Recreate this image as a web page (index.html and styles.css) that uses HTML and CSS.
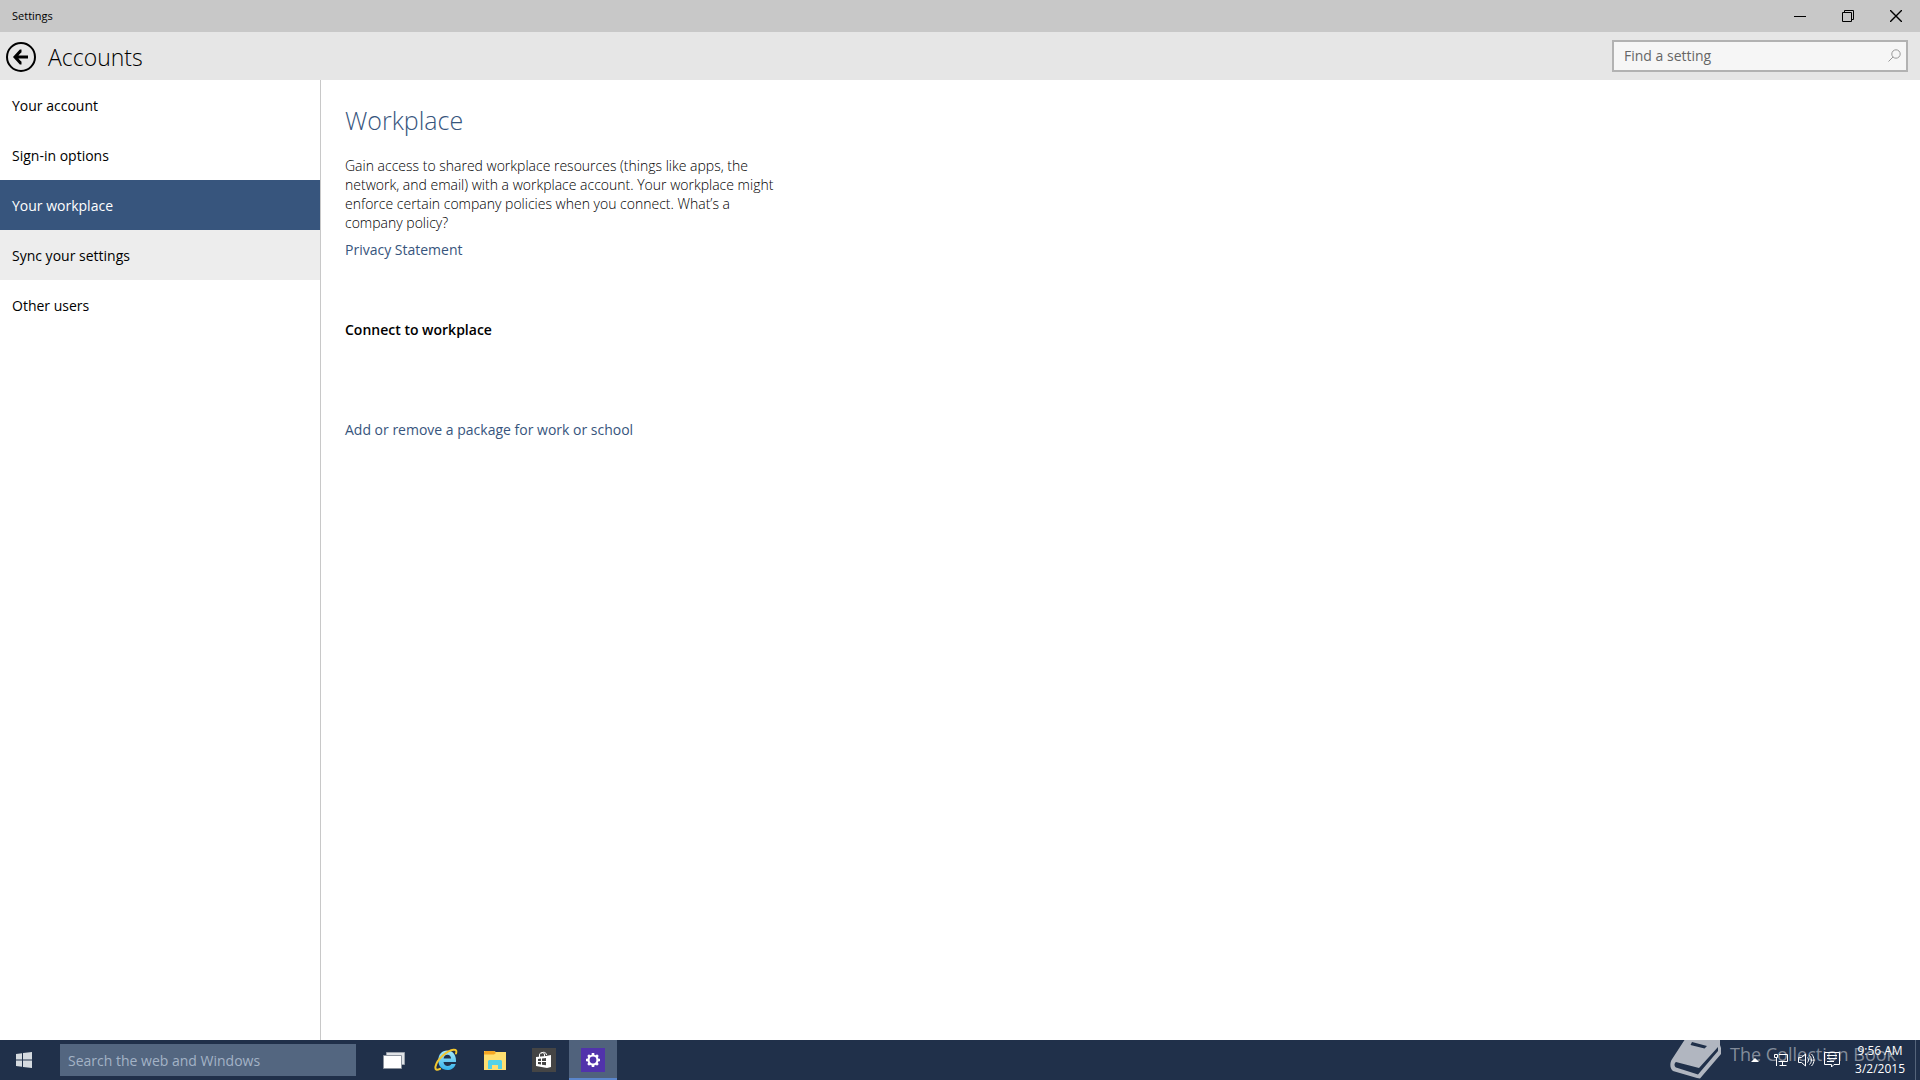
FILE: index.html
```html
<!DOCTYPE html>
<html lang="en">
<head>
<meta charset="utf-8">
<title>Settings</title>
<link rel="stylesheet" href="styles.css">
</head>
<body>
<header class="titlebar">
  <span class="titlebar-name">Settings</span>
  <div class="window-controls">
    <button class="window-button" aria-label="Minimize"><svg width="12" height="12" viewBox="0 0 12 12"><path d="M0 6.5h12"/></svg></button>
    <button class="window-button" aria-label="Restore"><svg width="12" height="12" viewBox="0 0 12 12"><path d="M.5 2.5h9v9h-9zM2.5 2V.5h9v9H10"/></svg></button>
    <button class="window-button" aria-label="Close"><svg width="12" height="12" viewBox="0 0 12 12"><path class="cross" d="M0 0l12 12M12 0L0 12"/></svg></button>
  </div>
</header>
<div class="page-header">
  <button class="back" aria-label="Back"><svg width="30" height="30" viewBox="0 0 30 30"><circle cx="15" cy="15" r="14"/><path class="arrow" d="M22 15H9.500M15.500 9h-1l-5.500 6 5.500 6h1"/></svg></button>
  <h1 class="page-title">Accounts</h1>
  <label class="find">
    <input class="find-input" type="text" placeholder="Find a setting" aria-label="Find a setting">
    <svg class="find-icon" width="13" height="13" viewBox="0 0 13 13"><circle cx="8" cy="5" r="4.200"/><path d="M5 8L.5 12.500"/></svg>
  </label>
</div>
<div class="body">
  <nav class="sidebar">
    <a class="nav-item" href="#account">Your account</a>
    <a class="nav-item" href="#signin">Sign-in options</a>
    <a class="nav-item nav-item-active" href="#workplace" aria-current="page">Your workplace</a>
    <a class="nav-item nav-item-hover" href="#sync">Sync your settings</a>
    <a class="nav-item" href="#users">Other users</a>
  </nav>
  <main class="content">
    <h2 class="section-title">Workplace</h2>
    <p class="intro">Gain access to shared workplace resources (things like apps, the network, and email) with a workplace account. Your workplace might enforce certain company policies when you connect. What’s a company policy?</p>
    <a class="link" href="#privacy">Privacy Statement</a>
    <h3 class="subhead">Connect to workplace</h3>
    <a class="link" href="#package">Add or remove a package for work or school</a>
  </main>
</div>
<footer class="taskbar">
  <button class="start" aria-label="Start"><svg width="16" height="16" viewBox="0 0 16 16"><path d="M0 2l6-.8v6.300H0zM7 1l9-1v7.500H7zM0 8.500h6v6.300L0 14zM7 8.500h9V16l-9-1z"/></svg></button>
  <input class="search" type="text" placeholder="Search the web and Windows" aria-label="Search the web and Windows">
  <div class="apps">
    <button class="app app-task-view" aria-label="Task view"><svg width="24" height="24" viewBox="0 0 24 24"><path fill="#dfe2e6" stroke="#9aa1ab" d="M4.500 4.500h18v12h-18z"/><path fill="#fff" stroke="#8b929d" d="M1.500 7.500h18v13h-18z"/></svg></button>
    <button class="app" aria-label="Internet Explorer"><svg width="24" height="24" viewBox="0 0 24 24">
      <defs><linearGradient id="ie" x1="0" y1="0" x2="0" y2="1"><stop offset="0" stop-color="#a5e9fb"/><stop offset="1" stop-color="#35b2ea"/></linearGradient></defs>
      <path fill="url(#ie)" fill-rule="evenodd" d="M13 2.500c5.500 0 9 4 9 10v1.500H9.500c.3 2.500 2 4 4.200 4 1.700 0 3-.7 3.700-2h4.300c-1.300 4-4.400 6-8.300 6C8 22 4.300 18.200 4.300 12.300S8 2.500 13 2.500zM9.600 10.500h7.500c-.2-2.400-1.600-3.800-3.700-3.800s-3.500 1.400-3.800 3.800z"/>
      <path fill="none" stroke="#f2c62f" stroke-width="2" stroke-linecap="round" d="M22 5.500c.8-2.500.3-4-2.500-3.800C13.500 2 3 11.500 1.500 18.500c-.6 3.200 1.200 4 4.500 2.300"/></svg></button>
    <button class="app" aria-label="File Explorer"><svg width="24" height="24" viewBox="0 0 24 24"><path fill="#ffdf70" d="M1 5V3h10l2 1h10v18H1z"/><path fill="#f5a623" d="M2 3h9l2 2-2 1.500H1V4z"/><path fill="#54d2e6" d="M5 13l1-1h12l1 1v8h-4v-4H9v4H5z"/></svg></button>
    <button class="app" aria-label="Store"><svg width="24" height="24" viewBox="0 0 24 24"><path fill="#454545" d="M0 0h24v24H0z"/><path fill="none" stroke="#fff" d="M7.500 9V7c0-3 5-3.500 5 0v1.500M9.500 5.500c1-2 5-1.500 5 1.500"/><path fill="#fff" d="M4 9l10-1 5-1v12l-4 1-11-2z"/><path fill="#454545" d="M6 11l3-.5V13H6zM10 10.500l4-.5v3h-4zM6 14h3v2.500L6 16zM10 14h4v3.300l-4-.6z"/></svg></button>
    <button class="app app-active" aria-label="Settings"><svg width="24" height="24" viewBox="0 0 24 24"><path fill="#5133ab" d="M0 0h24v24H0z"/><circle cx="12" cy="12" r="4.500" fill="none" stroke="#fff" stroke-width="2.200"/><path stroke="#fff" stroke-width="2.600" d="M12 5v2.500M12 16.500V19M5 12h2.500M16.500 12H19M7.100 7.100l1.700 1.700M15.200 15.200l1.700 1.700M16.900 7.100l-1.700 1.700M8.800 15.200l-1.700 1.700"/></svg></button>
  </div>
  <div class="tray">
    <button class="tray-button" aria-label="Show hidden icons"><svg width="8" height="4" viewBox="0 0 8 4"><path fill="#fff" d="M0 4l4-4 4 4z"/></svg></button>
    <button class="tray-button" aria-label="Network"><svg class="tray-icon" width="16" height="16" viewBox="0 0 16 16"><path d="M6 2.500h8.500v7H5.500M9.500 10v3M6.500 13.500h7M1.500 2.500h3v3h-3zM3.500 6v8"/></svg></button>
    <button class="tray-button" aria-label="Volume"><svg class="tray-icon" width="18" height="16" viewBox="0 0 18 16"><path d="M1.500 5.500h3l4-3.500v12l-4-3.500h-3zM10.500 5.500c1.300 1.500 1.300 3.500 0 5M12.500 3.500c2.500 2.500 2.500 6.500 0 9M14.500 2c3.300 3.500 3.300 8.500 0 12"/></svg></button>
    <button class="tray-button" aria-label="Notifications"><svg class="tray-icon" width="18" height="16" viewBox="0 0 18 16"><path d="M1.500 .5h15v12h-5.500L8.500 15V12.500h-7zM4 3.500h10M4 6.500h10M4 9.500h7"/></svg></button>
    <time class="clock" datetime="2015-03-02T09:56"><span>9:56 AM</span><span>3/2/2015</span></time>
    <button class="show-desktop" aria-label="Show desktop"></button>
  </div>
  <div class="watermark">
    <svg width="52" height="40" viewBox="0 0 52 40"><path fill-rule="evenodd" d="M14.500 0H50v5L51 8v6L30 38.500 27 38 3 31C-.5 28.500 0 23 1.500 20zM22 2l-1.500 3 14 3.500L37 6zM6 22c-2 1.500-2 4 0 5.500l22 7L48 11V7L29 28z"/></svg>
    <span>The Collection Book</span>
  </div>
</footer>
</body>
</html>
```
FILE: styles.css
```css
* { box-sizing: border-box; }
body { margin: 0; min-height: 100vh; display: flex; flex-direction: column; font: 14px/20px "Open Sans", sans-serif; color: #000; background: #fff; }
button { border: 0; padding: 0; background: none; }

.titlebar { height: 32px; display: flex; align-items: center; justify-content: space-between; padding-left: 12px; background: #c8c8c8; font-size: 11px; }
.window-controls { display: flex; }
.window-button { width: 48px; height: 32px; display: grid; place-items: center; }
.window-button path { fill: none; stroke: #000; }
.window-button .cross { stroke-width: 1.4; }

.page-header { height: 48px; display: flex; align-items: flex-end; padding: 0 12px 8px 6px; background: #e6e6e6; }
.back { display: flex; }
.back svg { fill: none; stroke: #000; stroke-width: 2; }
.back .arrow { stroke-width: 3; }
.page-title { margin: 0 auto 0 12px; font-size: 23px; font-weight: 300; line-height: 30px; }
.find { display: flex; position: relative; }
.find-input { width: 296px; height: 32px; border: 2px solid #b2b2b2; background: #f6f6f6; padding: 0 10px 2px; font: inherit; }
.find-input::placeholder { color: #666; opacity: 1; }
.find-icon { position: absolute; right: 7px; top: 9px; fill: none; stroke: #999; }

.body { flex: 1; display: flex; }
.sidebar { width: 321px; border-right: 1px solid #c8c8c8; }
.nav-item { display: block; padding: 16px 12px 14px; color: #000; text-decoration: none; }
.nav-item-active { background: #37557d; color: #fff; }
.nav-item-hover { background: #ededed; }

.content { flex: 1; padding: 24px; }
.section-title { margin: 0 0 20px; font-size: 25px; font-weight: 300; line-height: 32px; color: #37557d; }
.intro { margin: 0 0 8px; max-width: 440px; font-weight: 300; line-height: 19px; }
.link { color: #37557d; text-decoration: none; }
.subhead { margin: 60px 0 80px; font-size: 14px; font-weight: 600; }

.taskbar { position: relative; height: 40px; display: flex; background: #20304a; }
.start { width: 48px; display: grid; place-items: center; fill: #d5dae0; }
.search { width: 296px; height: 32px; margin: 4px 12px; padding: 0 8px; border: 0; background: #536680; color: #fff; font: inherit; }
.search::placeholder { color: #a3b3c6; opacity: 1; }
.apps { display: flex; gap: 1px; padding-left: 2px; }
.app { width: 48px; display: grid; place-items: center; }
.app-task-view { margin-right: 3px; }
.app-active { background: #50627c; box-shadow: inset 0 -2px #5b86cc; }

.tray { margin-left: auto; display: flex; align-items: center; gap: 8px; color: #fff; }
.tray-button { display: flex; }
.tray-button:first-child { margin-right: 6px; }
.tray-icon { fill: none; stroke: #fff; }
.clock { display: flex; flex-direction: column; padding: 0 2px 0 6px; text-align: center; font-size: 12px; line-height: 18px; }
.show-desktop { width: 5px; height: 40px; border-left: 1px solid #55647a; }

.watermark { position: absolute; right: 24px; top: 0; display: flex; gap: 8px; color: rgba(255, 255, 255, 0.45); font-size: 18px; line-height: 28px; pointer-events: none; }
.watermark svg { fill: rgba(255, 255, 255, 0.65); }
```
